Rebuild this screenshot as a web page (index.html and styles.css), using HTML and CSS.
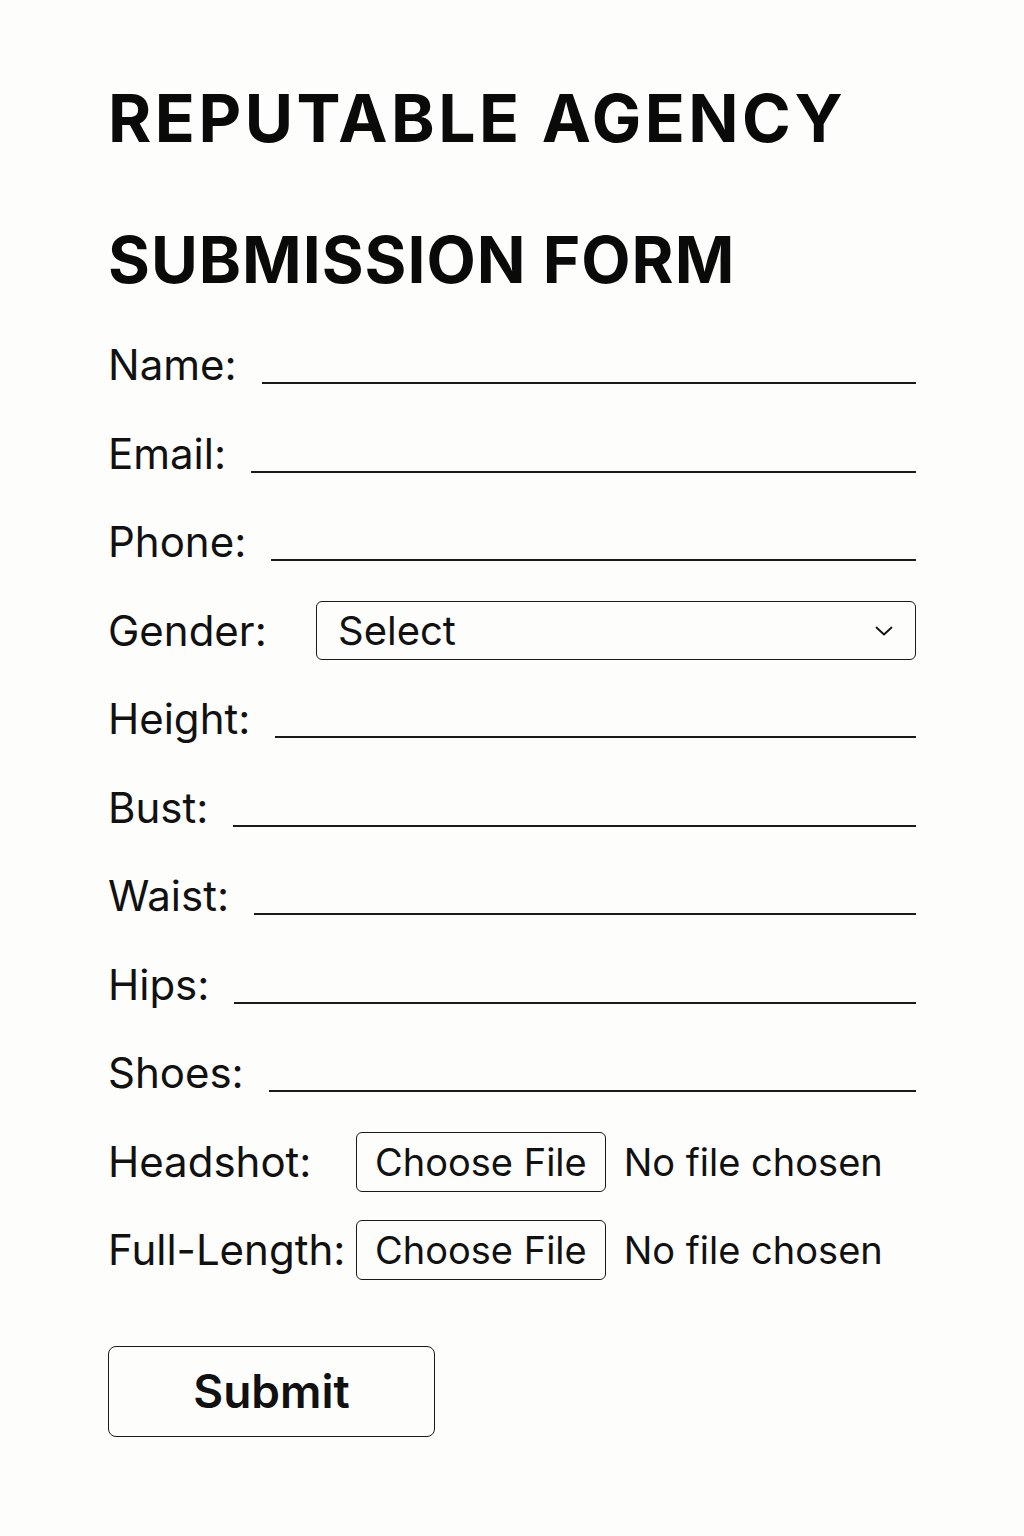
FILE: index.html
```html
<!DOCTYPE html>
<html>
<head>
  <title>Reputable Agency - Submission Form</title>
  <link rel="stylesheet" href="styles.css">
</head>
<body>
  <div class="page">
    <h1 class="title">REPUTABLE AGENCY</h1>
    <h2 class="title subtitle">SUBMISSION FORM</h2>

    <form class="form" onsubmit="return false;">
      <div class="row">
        <label for="name">Name:</label>
        <input type="text" id="name" class="line-input">
      </div>
      <div class="row">
        <label for="email">Email:</label>
        <input type="email" id="email" class="line-input">
      </div>
      <div class="row">
        <label for="phone">Phone:</label>
        <input type="tel" id="phone" class="line-input">
      </div>
      <div class="row">
        <label for="gender" class="label-gender">Gender:</label>
        <div class="select-wrap">
          <select id="gender">
            <option>Select</option>
            <option>Female</option>
            <option>Male</option>
            <option>Other</option>
          </select>
          <svg class="chevron" width="18" height="10" viewBox="0 0 18 10">
            <path d="M1.5 1.5 L9 8.5 L16.5 1.5" fill="none" stroke="#111" stroke-width="1.8" stroke-linecap="round" stroke-linejoin="round"/>
          </svg>
        </div>
      </div>
      <div class="row">
        <label for="height">Height:</label>
        <input type="text" id="height" class="line-input">
      </div>
      <div class="row">
        <label for="bust">Bust:</label>
        <input type="text" id="bust" class="line-input">
      </div>
      <div class="row">
        <label for="waist">Waist:</label>
        <input type="text" id="waist" class="line-input">
      </div>
      <div class="row">
        <label for="hips">Hips:</label>
        <input type="text" id="hips" class="line-input">
      </div>
      <div class="row">
        <label for="shoes">Shoes:</label>
        <input type="text" id="shoes" class="line-input">
      </div>
      <div class="row">
        <label for="headshot" class="label-file">Headshot:</label>
        <input type="file" id="headshot" class="file-input">
      </div>
      <div class="row">
        <label for="fulllength" class="label-file">Full-Length:</label>
        <input type="file" id="fulllength" class="file-input">
      </div>

      <button type="submit" class="submit-button">Submit</button>
    </form>
  </div>
</body>
</html>
```

FILE: styles.css
```css
body {
  font-family: Inter, 'Noto Sans', sans-serif;
  background-color: #fdfdfb;
  color: #111;
  margin: 0;
}

.page {
  padding: 68px 108px 40px;
}

.title {
  font-size: 66px;
  font-weight: 700;
  letter-spacing: 3.5px;
  line-height: 100px;
  margin: 0;
  color: #0a0a0a;
}

.subtitle {
  font-size: 64px;
  letter-spacing: 1px;
  margin-top: 42px;
}

.form {
  margin-top: 11px;
}

.row {
  display: flex;
  align-items: center;
  height: 88.5px;
}

.row label {
  flex-shrink: 0;
  font-size: 42px;
  line-height: 50px;
  white-space: nowrap;
  margin-right: 25px;
}

.line-input {
  flex: 1;
  min-width: 0;
  height: 38px;
  box-sizing: border-box;
  border: none;
  border-bottom: 2px solid #1a1a1a;
  background: transparent;
  font-family: inherit;
  font-size: 32px;
  padding: 0 4px;
  outline: none;
}

.row .label-gender {
  width: 208px;
  margin-right: 0;
}

.select-wrap {
  position: relative;
  flex: 1;
}

.select-wrap select {
  appearance: none;
  -webkit-appearance: none;
  width: 100%;
  height: 59px;
  box-sizing: border-box;
  border: 1.5px solid #1a1a1a;
  border-radius: 6px;
  background: transparent;
  color: #111;
  font-family: inherit;
  font-size: 40px;
  padding: 0 50px 0 21px;
  outline: none;
}

.chevron {
  position: absolute;
  right: 23px;
  top: 25px;
  pointer-events: none;
}

.row .label-file {
  width: 248px;
  margin-right: 0;
}

.file-input {
  flex: 1;
  min-width: 0;
  font-family: inherit;
  font-size: 38px;
  color: #111;
}

.file-input::file-selector-button {
  font-family: inherit;
  font-size: 38px;
  color: #111;
  height: 60px;
  padding: 0 18px;
  margin-right: 18px;
  border: 1.5px solid #1a1a1a;
  border-radius: 6px;
  background: transparent;
  cursor: pointer;
}

.submit-button {
  display: block;
  margin-top: 51px;
  width: 327px;
  height: 91px;
  border: 1.5px solid #1a1a1a;
  border-radius: 8px;
  background: transparent;
  color: #111;
  font-family: inherit;
  font-size: 46px;
  font-weight: 600;
  cursor: pointer;
}
```
